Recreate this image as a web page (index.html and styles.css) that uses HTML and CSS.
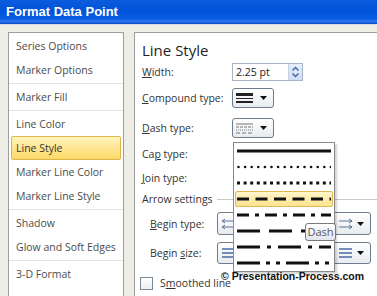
FILE: index.html
```html
<!DOCTYPE html>
<html lang="en">
<head>
    <meta charset="UTF-8">
    <meta name="viewport" content="width=device-width, initial-scale=1.0">
    <title>Format Data Point</title>
    <link rel="stylesheet" href="styles.css">
</head>
<body>
    <div class="titlebar">Format Data Point</div>

    <div class="content">
        <ul class="nav">
            <li>Series Options</li>
            <li>Marker Options</li>
            <li class="group">Marker Fill</li>
            <li class="group">Line Color</li>
            <li class="active">Line Style</li>
            <li>Marker Line Color</li>
            <li>Marker Line Style</li>
            <li class="group">Shadow</li>
            <li>Glow and Soft Edges</li>
            <li class="group">3-D Format</li>
        </ul>

        <div class="pane">
            <h2>Line Style</h2>

            <div class="row row-width">
                <span class="label"><u>W</u>idth:</span>
                <div class="spin">
                    <span class="spin-value">2.25 pt</span>
                    <span class="spin-arrows">
                        <svg width="9" height="12" viewBox="0 0 9 12">
                            <path d="M1.5 4.5 L4.5 1.5 L7.5 4.5 M1.5 7.5 L4.5 10.5 L7.5 7.5" fill="none" stroke="#3d62a8" stroke-width="1.4"/>
                        </svg>
                    </span>
                </div>
            </div>

            <div class="row row-compound">
                <span class="label"><u>C</u>ompound type:</span>
                <div class="drop">
                    <svg class="drop-icon" width="18" height="12" viewBox="0 0 18 12">
                        <rect x="0" y="1" width="17" height="3" fill="#222"/>
                        <rect x="0" y="6" width="17" height="1" fill="#222"/>
                        <rect x="0" y="9" width="17" height="2" fill="#222"/>
                    </svg>
                    <svg class="caret" width="7" height="4" viewBox="0 0 7 4"><polygon points="0,0 7,0 3.5,4" fill="#111"/></svg>
                </div>
            </div>

            <div class="row row-dash">
                <span class="label"><u>D</u>ash type:</span>
                <div class="drop">
                    <svg class="drop-icon" width="18" height="12" viewBox="0 0 18 12">
                        <line x1="0" y1="2" x2="17" y2="2" stroke="#777" stroke-width="1"/>
                        <line x1="0" y1="5" x2="17" y2="5" stroke="#777" stroke-width="1" stroke-dasharray="3 1"/>
                        <line x1="0" y1="8" x2="17" y2="8" stroke="#777" stroke-width="1" stroke-dasharray="1 1"/>
                        <line x1="0" y1="11" x2="17" y2="11" stroke="#777" stroke-width="1" stroke-dasharray="4 2"/>
                    </svg>
                    <svg class="caret" width="7" height="4" viewBox="0 0 7 4"><polygon points="0,0 7,0 3.5,4" fill="#111"/></svg>
                </div>
            </div>

            <div class="row row-cap">
                <span class="label">Ca<u>p</u> type:</span>
            </div>

            <div class="row row-join">
                <span class="label"><u>J</u>oin type:</span>
            </div>

            <div class="row row-arrow">
                <span class="section-title">Arrow settings</span>
            </div>

            <div class="row row-begin-type">
                <span class="label label-indent"><u>B</u>egin type:</span>
                <div class="drop drop-wide">
                    <svg class="drop-icon" width="22" height="12" viewBox="0 0 22 12">
                        <path d="M1 3 H14 M1 3 L4 1 M1 3 L4 5 M1 9 H14 M1 9 L4 7 M1 9 L4 11" fill="none" stroke="#5b7398" stroke-width="1"/>
                    </svg>
                    <svg class="caret" width="7" height="4" viewBox="0 0 7 4"><polygon points="0,0 7,0 3.5,4" fill="#111"/></svg>
                </div>
                <span class="label-end"></span>
                <div class="drop drop-wide">
                    <svg class="drop-icon" width="22" height="12" viewBox="0 0 22 12">
                        <path d="M8 3 H21 M21 3 L18 1 M21 3 L18 5 M8 9 H21 M21 9 L18 7 M21 9 L18 11" fill="none" stroke="#5b7398" stroke-width="1"/>
                    </svg>
                    <svg class="caret" width="7" height="4" viewBox="0 0 7 4"><polygon points="0,0 7,0 3.5,4" fill="#111"/></svg>
                </div>
            </div>

            <div class="row row-begin-size">
                <span class="label label-indent">Begin <u>s</u>ize:</span>
                <div class="drop drop-wide">
                    <svg class="drop-icon" width="22" height="12" viewBox="0 0 22 12">
                        <path d="M1 2 H14 M1 6 H14 M1 10 H14" fill="none" stroke="#4a6ba8" stroke-width="1.6"/>
                    </svg>
                    <svg class="caret" width="7" height="4" viewBox="0 0 7 4"><polygon points="0,0 7,0 3.5,4" fill="#111"/></svg>
                </div>
                <span class="label-end"></span>
                <div class="drop drop-wide">
                    <svg class="drop-icon" width="22" height="12" viewBox="0 0 22 12">
                        <path d="M8 2 H21 M8 6 H21 M8 10 H21" fill="none" stroke="#4a6ba8" stroke-width="1.6"/>
                    </svg>
                    <svg class="caret" width="7" height="4" viewBox="0 0 7 4"><polygon points="0,0 7,0 3.5,4" fill="#111"/></svg>
                </div>
            </div>

            <div class="row row-smooth">
                <span class="checkbox"></span>
                <span>S<u>m</u>oothed line</span>
            </div>
        </div>
    </div>

    <!-- open dash type menu -->
    <ul class="dash-list">
        <li><svg width="94" height="16"><line class="dash-line" x1="0" y1="8" x2="94" y2="8"/></svg></li>
        <li><svg width="94" height="16"><line class="dash-line round-dot" x1="1.5" y1="8" x2="94" y2="8"/></svg></li>
        <li><svg width="94" height="16"><line class="dash-line" x1="0" y1="8" x2="94" y2="8" stroke-dasharray="3 3.6"/></svg></li>
        <li class="selected"><svg width="94" height="16"><line class="dash-line" x1="0" y1="8" x2="94" y2="8" stroke-dasharray="12 6.5"/></svg></li>
        <li><svg width="94" height="16"><line class="dash-line" x1="0" y1="8" x2="94" y2="8" stroke-dasharray="12 6 4 6"/></svg></li>
        <li><svg width="94" height="16"><line class="dash-line" x1="0" y1="8" x2="94" y2="8" stroke-dasharray="23 9"/></svg></li>
        <li><svg width="94" height="16"><line class="dash-line" x1="0" y1="8" x2="94" y2="8" stroke-dasharray="23 7 4 7"/></svg></li>
        <li><svg width="94" height="16"><line class="dash-line" x1="0" y1="8" x2="94" y2="8" stroke-dasharray="23 6 4 6 4 6"/></svg></li>
    </ul>

    <div class="tooltip">Dash</div>

    <div class="credit">&copy; Presentation-Process.com</div>
</body>
</html>
```

FILE: styles.css
```css
body {
    margin: 0;
    width: 377px;
    height: 296px;
    overflow: hidden;
    position: relative;
    background-color: #eeede6;
    font-family: "Segoe UI", "Open Sans", sans-serif;
    font-size: 10.5px;
    color: #333;
}

.titlebar {
    height: 24px;
    line-height: 24px;
    padding-left: 6px;
    color: white;
    font-family: "Liberation Sans", Arial, sans-serif;
    font-weight: bold;
    font-size: 13px;
    background: linear-gradient(#0b5ddc 0%, #0052d8 45%, #0a5ce4 78%, #2c78f0 90%, #0745c0 100%);
    border-bottom: 1px solid #d6dae2;
}

.content {
    display: flex;
    padding: 7px 0 0 8px;
}

/* left category list */
.nav {
    list-style: none;
    margin: 0;
    padding: 1px 0 0;
    width: 114px;
    height: 280px;
    flex-shrink: 0;
    background-color: white;
    border: 1px solid #9d9d9d;
    color: #4b4b4b;
}

.nav li {
    height: 24px;
    line-height: 24px;
    padding-left: 7px;
    white-space: nowrap;
}

.nav li.group {
    margin-top: 1px;
    padding-top: 1px;
    border-top: 1px solid #e4e4e4;
}

.nav li.active {
    margin: 0 2px;
    padding-left: 4px;
    height: 22px;
    line-height: 22px;
    border: 1px solid #e0b54c;
    border-radius: 2px;
    background: linear-gradient(#fff4bd, #fcd866);
    color: #333;
}

/* right settings pane */
.pane {
    margin-left: 10px;
    width: 260px;
    height: 280px;
    flex-shrink: 0;
    padding-left: 7px;
    background-color: white;
    border: 1px solid #9d9d9d;
}

.pane h2 {
    margin: 5px 0 0;
    font-size: 15px;
    font-weight: normal;
    line-height: 24px;
    color: #1e1e1e;
}

.row {
    display: flex;
    align-items: center;
    white-space: nowrap;
}

.label {
    width: 90px;
    flex-shrink: 0;
}

.label-indent {
    width: 67px;
    padding-left: 8px;
}

.label-end {
    width: 66px;
    flex-shrink: 0;
}

.row-width { margin-top: 1px; height: 18px; }
.row-compound { margin-top: 7px; height: 20px; }
.row-dash { margin-top: 10px; height: 20px; }
.row-cap { margin-top: 6px; height: 20px; }
.row-join { margin-top: 4px; height: 20px; }
.row-arrow { margin-top: 2px; height: 18px; }
.row-begin-type { margin-top: 4px; height: 23px; }
.row-begin-size { margin-top: 7px; height: 22px; }
.row-smooth { margin-top: 10px; height: 18px; }

.section-title {
    display: flex;
    align-items: center;
    width: 100%;
}

.section-title::after {
    content: "";
    flex: 1;
    margin-left: 4px;
    border-top: 1px solid #c9c9c9;
}

.spin {
    display: flex;
    width: 69px;
    height: 16px;
    border: 1px solid #a9b5c6;
}

.spin-value {
    flex: 1;
    padding-left: 3px;
    line-height: 16px;
    color: #222;
}

.spin-arrows {
    width: 13px;
    display: flex;
    align-items: center;
    justify-content: center;
    background: linear-gradient(#e6eefb, #cfdcf3);
    border-left: 1px solid #c5d2e6;
}

.drop {
    display: flex;
    align-items: center;
    width: 34px;
    height: 100%;
    box-sizing: border-box;
    padding: 0 3px;
    border: 1px solid #6e7c8c;
    border-radius: 3px;
    background: linear-gradient(#ffffff, #e8ebef);
    flex-shrink: 0;
}

.row-compound .drop,
.row-dash .drop {
    width: 42px;
}

.drop-wide {
    width: 44px;
}

.caret {
    margin-left: 6px;
}

.drop-wide .caret {
    margin-left: 4px;
}

.checkbox {
    width: 11px;
    height: 11px;
    margin-left: -2px;
    margin-right: 7px;
    border: 1px solid #7c8a98;
    background: linear-gradient(#ffffff, #eceef0);
}

/* dash type menu */
.dash-list {
    position: absolute;
    left: 233px;
    top: 142px;
    width: 100px;
    margin: 0;
    padding: 0;
    list-style: none;
    background-color: white;
    border: 1px solid #8a8a8a;
    box-shadow: 2px 2px 2px rgba(0, 0, 0, 0.18);
}

.dash-list li {
    height: 16px;
    padding-left: 3px;
}

.dash-list li svg {
    display: block;
}

.dash-list li.selected {
    height: 14px;
    margin: 0 1px;
    padding-left: 1px;
    border: 1px solid #dfb957;
    border-radius: 2px;
    background: linear-gradient(#fff6cc, #fde38c);
}

.dash-list li.selected svg {
    margin-top: -1px;
}

.dash-line {
    stroke: #111;
    stroke-width: 3;
}

.round-dot {
    stroke-width: 2.6;
    stroke-linecap: round;
    stroke-dasharray: 0 6.6;
}

.tooltip {
    position: absolute;
    left: 305px;
    top: 223px;
    width: 29px;
    height: 16px;
    line-height: 16px;
    text-align: center;
    border: 1px solid #7a7a7a;
    border-radius: 3px;
    background: linear-gradient(#ffffff, #e4e5ee);
    color: #575757;
    font-size: 11px;
}

.credit {
    position: absolute;
    left: 221px;
    top: 270px;
    font-family: "Liberation Sans", Arial, sans-serif;
    font-weight: bold;
    font-size: 10.5px;
    color: #111;
}
```
